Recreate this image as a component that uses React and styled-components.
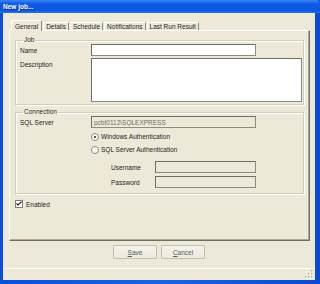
import React from "react";
import styled, { createGlobalStyle } from "styled-components";

const GlobalStyle = createGlobalStyle`
  html, body {
    margin: 0;
    padding: 0;
    background: #0a3fb0;
  }
  * {
    box-sizing: border-box;
  }
`;

const WindowFrame = styled.div`
  width: 320px;
  height: 284px;
  display: flex;
  flex-direction: column;
  background: linear-gradient(to right, #0b4fd8, #1b62e6 50%, #0a4ad0);
  font-family: "Liberation Sans", Arial, sans-serif;
  font-size: 6.5px;
  color: #1e1e1e;
`;

const TitleBar = styled.div`
  height: 13px;
  display: flex;
  align-items: center;
  padding-left: 3px;
  color: #fff;
  font-weight: bold;
  font-size: 6.5px;
  background: linear-gradient(to bottom, #3a86f4, #0c5ae6 30%, #0a56e0 80%, #2a72ee);
  border-top-right-radius: 4px;
  text-shadow: 1px 1px 0 #0a3a9a;
`;

const Body = styled.div`
  flex: 1;
  margin: 0 5px 4px 3px;
  background: #ece9d8;
  display: flex;
  flex-direction: column;
  padding-top: 7px;
`;

const TabControl = styled.div`
  margin: 0 5px 0 6px;
  display: flex;
  flex-direction: column;
`;

const TabStrip = styled.div`
  height: 10px;
  display: flex;
  align-items: flex-end;
  gap: 1px;
  padding-left: 2px;
`;

const Tab = styled.div`
  position: relative;
  z-index: ${({ $active }) => ($active ? 2 : 1)};
  height: ${({ $active }) => ($active ? "11px" : "8px")};
  margin-bottom: ${({ $active }) => ($active ? "-1px" : "0")};
  padding: 0 ${({ $active }) => ($active ? "3px" : "2px")};
  display: flex;
  align-items: center;
  background: #ece9d8;
  border-top: 1px solid #fff;
  border-left: 1px solid #fff;
  border-right: 1px solid #8a877a;
  border-top-left-radius: 1px;
  border-top-right-radius: 1px;
  white-space: nowrap;
`;

const Panel = styled.div`
  height: 211px;
  background: #ece9d8;
  border-top: 1px solid #fff;
  border-left: 1px solid #fff;
  border-right: 1px solid #716f64;
  border-bottom: 1px solid #716f64;
  box-shadow: inset -1px -1px 0 #aca899;
  padding: 5px 5px 0 5px;
`;

const GroupBox = styled.fieldset`
  margin: ${({ $gap }) => ($gap ? "3px" : "0")} 0 0 0;
  padding: 0 1px ${({ $bottom }) => $bottom}px 4px;
  min-width: 0;
  border: 1px solid #d0cdbc;
  box-shadow: inset 1px 1px 0 #fff, 1px 1px 0 #fff;
`;

const Legend = styled.legend`
  margin-left: 3px;
  padding: 0 1px;
  font-size: 6.5px;
  line-height: 8px;
  color: #2a2a2a;
`;

const FieldGrid = styled.div`
  display: grid;
  grid-template-columns: 71px 1fr;
  row-gap: 2px;
`;

const Label = styled.span`
  align-self: ${({ $top }) => ($top ? "start" : "center")};
  padding-top: ${({ $top }) => ($top ? "3px" : "0")};
  white-space: nowrap;
`;

const TextBox = styled.input`
  width: ${({ $w }) => $w}px;
  height: 12px;
  margin: 0;
  padding: 0 2px;
  font-family: "Liberation Sans", Arial, sans-serif;
  font-size: 6.5px;
  color: #6e6d66;
  background: ${({ $disabled }) => ($disabled ? "#ece9d8" : "#fff")};
  border: 1px solid #8f8c7e;
  border-top-color: #6f6d62;
  border-left-color: #6f6d62;
  outline: none;
`;

const TextArea = styled.textarea`
  width: 100%;
  height: 44px;
  margin: 0;
  padding: 0;
  resize: none;
  display: block;
  font-family: "Liberation Sans", Arial, sans-serif;
  font-size: 6.5px;
  background: #fff;
  border: 1px solid #8f8c7e;
  border-top-color: #6f6d62;
  border-left-color: #6f6d62;
  outline: none;
`;

const OptionRow = styled.div`
  height: 13px;
  margin-left: 71px;
  display: flex;
  align-items: center;
  gap: 2px;
`;

const Radio = styled.span`
  position: relative;
  width: 8px;
  height: 8px;
  border-radius: 50%;
  border: 1px solid #8a877a;
  background: #fff;
  &::after {
    content: "";
    display: ${({ $checked }) => ($checked ? "block" : "none")};
    position: absolute;
    left: 2px;
    top: 2px;
    width: 2px;
    height: 2px;
    border-radius: 50%;
    background: #222;
  }
`;

const CredentialGrid = styled.div`
  margin: 5px 0 0 91px;
  display: grid;
  grid-template-columns: 44px 101px;
  row-gap: 3px;
`;

const CheckRow = styled.div`
  margin-top: 6px;
  display: flex;
  align-items: center;
  gap: 3px;
  height: 8px;
`;

const CheckBox = styled.span`
  width: 8px;
  height: 8px;
  border: 1px solid #7f7d70;
  background: #fff;
  display: flex;
  align-items: center;
  justify-content: center;
`;

const ButtonRow = styled.div`
  margin-top: 4px;
  display: flex;
  justify-content: center;
  gap: 4px;
`;

const Button = styled.button`
  width: 44px;
  height: 14px;
  margin: 0;
  padding: 0;
  font-family: "Liberation Sans", Arial, sans-serif;
  font-size: 6.5px;
  color: #5a5a56;
  background: linear-gradient(to bottom, #f4f3ec, #ebe9df);
  border: 1px solid #c3c0b0;
  border-radius: 1px;
`;

const StatusBar = styled.div`
  margin-top: auto;
  height: 12px;
  border-top: 1px solid #fbfaf4;
  display: flex;
  justify-content: flex-end;
  align-items: flex-end;
  padding: 0 1px 1px 0;
`;

const Grip = () => (
  <svg width="10" height="10" viewBox="0 0 10 10">
    {[
      [7, 1],
      [4, 4],
      [7, 4],
      [1, 7],
      [4, 7],
      [7, 7],
    ].map(([x, y]) => (
      <g key={`${x}-${y}`}>
        <rect x={x + 1} y={y + 1} width="1.5" height="1.5" fill="#fff" />
        <rect x={x} y={y} width="1.5" height="1.5" fill="#b8b5a5" />
      </g>
    ))}
  </svg>
);

const tabs = ["General", "Details", "Schedule", "Notifications", "Last Run Result"];

export default function App() {
  return (
    <>
      <GlobalStyle />
      <WindowFrame>
        <TitleBar>New job...</TitleBar>
        <Body>
          <TabControl>
            <TabStrip>
              {tabs.map((t, i) => (
                <Tab key={t} $active={i === 0}>
                  {t}
                </Tab>
              ))}
            </TabStrip>
            <Panel>
              <GroupBox $bottom={2}>
                <Legend>Job</Legend>
                <FieldGrid>
                  <Label>Name</Label>
                  <TextBox $w={165} defaultValue="" />
                  <Label $top>Description</Label>
                  <TextArea defaultValue="" />
                </FieldGrid>
              </GroupBox>
              <GroupBox $gap $bottom={5}>
                <Legend>Connection</Legend>
                <FieldGrid>
                  <Label>SQL Server</Label>
                  <TextBox $w={165} $disabled readOnly value={"pcbt0112\\SQLEXPRESS"} />
                </FieldGrid>
                <div style={{ height: 2 }} />
                <OptionRow>
                  <Radio $checked />
                  <span>Windows Authentication</span>
                </OptionRow>
                <OptionRow>
                  <Radio />
                  <span>SQL Server Authentication</span>
                </OptionRow>
                <CredentialGrid>
                  <Label>Username</Label>
                  <TextBox $w={101} $disabled readOnly value="" />
                  <Label>Password</Label>
                  <TextBox $w={101} $disabled readOnly value="" />
                </CredentialGrid>
              </GroupBox>
              <CheckRow>
                <CheckBox>
                  <svg width="6" height="6" viewBox="0 0 6 6">
                    <path d="M0.5 2.5 L2 4 L5.5 0.8" stroke="#222" strokeWidth="1.2" fill="none" />
                  </svg>
                </CheckBox>
                <span>Enabled</span>
              </CheckRow>
            </Panel>
          </TabControl>
          <ButtonRow>
            <Button>
              <u>S</u>ave
            </Button>
            <Button>
              <u>C</u>ancel
            </Button>
          </ButtonRow>
          <StatusBar>
            <Grip />
          </StatusBar>
        </Body>
      </WindowFrame>
    </>
  );
}
